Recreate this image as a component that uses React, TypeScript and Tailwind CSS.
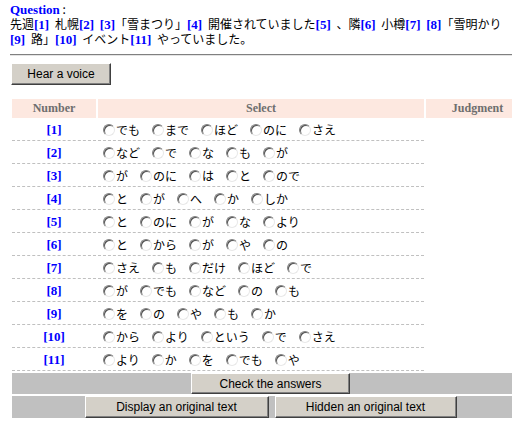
import React from 'react';

const options: string[][] = [
  ['でも', 'まで', 'ほど', 'のに', 'さえ'],
  ['など', 'で', 'な', 'も', 'が'],
  ['が', 'のに', 'は', 'と', 'ので'],
  ['と', 'が', 'へ', 'か', 'しか'],
  ['と', 'のに', 'が', 'な', 'より'],
  ['と', 'から', 'が', 'や', 'の'],
  ['さえ', 'も', 'だけ', 'ほど', 'で'],
  ['が', 'でも', 'など', 'の', 'も'],
  ['を', 'の', 'や', 'も', 'か'],
  ['から', 'より', 'という', 'で', 'さえ'],
  ['より', 'か', 'を', 'でも', 'や'],
];

const Ref: React.FC<{ n: number }> = ({ n }) => (
  <a className="font-['Liberation_Serif',serif] font-bold text-[13px] leading-none text-[#0000ff]">[{n}]</a>
);

const Radio: React.FC = () => (
  <span className="inline-block w-[12px] h-[12px] shrink-0 rounded-full bg-white border border-t-[#808080] border-l-[#808080] border-r-[#e8e8e8] border-b-[#e8e8e8] shadow-[inset_1px_1px_0_#505050]" />
);

const Btn: React.FC<{ className?: string; children: React.ReactNode }> = ({ className, children }) => (
  <button
    className={`bg-[#d4d0c8] text-black text-[12px] leading-none font-['Liberation_Sans',sans-serif] border border-t-white border-l-white border-r-[#404040] border-b-[#404040] shadow-[inset_-1px_-1px_0_#808080] ${className ?? ''}`}
  >
    {children}
  </button>
);

const Header: React.FC<{ children: React.ReactNode }> = ({ children }) => (
  <div className="h-[19px] bg-[#fde8e0] text-center leading-[19px] font-['Liberation_Serif',serif] font-bold text-[12px] text-[#6e6e6e]">
    {children}
  </div>
);

export default function App() {
  return (
    <div className="w-[512px] h-[423px] overflow-hidden bg-white pl-[10px] text-black text-[12px] font-['Noto_Sans_CJK_JP',sans-serif]">
      <div className="pt-[1px] leading-[15px]">
        <div className="h-[15px]">
          <span className="font-['Liberation_Serif',serif] font-bold text-[13px] leading-none text-[#0000ff]">Question</span> :
        </div>
        <p className="w-[502px] leading-[15px] [word-spacing:3px]">
          先週<Ref n={1} /> 札幌<Ref n={2} /> <Ref n={3} />「雪まつり」<Ref n={4} /> 開催されていました<Ref n={5} /> 、隣<Ref n={6} /> 小樽<Ref n={7} /> <Ref n={8} />「雪明かり<Ref n={9} /> 路」<Ref n={10} /> イベント<Ref n={11} /> やっていました。
        </p>
      </div>

      <div className="mt-[8px] w-[502px] h-[2px] border-t border-t-[#808080] border-b border-b-[#e4e4e4]" />

      <Btn className="mt-[7px] ml-[1px] w-[100px] h-[22px]">Hear a voice</Btn>

      <div className="mt-[12px] w-[521px] p-[2px] grid grid-cols-[84px_326px_103px] gap-[2px]">
        <Header>Number</Header>
        <Header>Select</Header>
        <Header>Judgment</Header>

        {options.map((row, i) => (
          <React.Fragment key={i}>
            <div className="h-[21px] border-b border-dashed border-[#c0c0c0] text-center pt-[2px] leading-[14px]">
              <Ref n={i + 1} />
            </div>
            <div className="h-[21px] border-b border-dashed border-[#c0c0c0] flex items-center pl-[5px]">
              {row.map((o, j) => (
                <label key={j} className="flex items-center mr-[12px]">
                  <Radio />
                  <span className="ml-[1px] leading-[14px]">{o}</span>
                </label>
              ))}
            </div>
            <div />
          </React.Fragment>
        ))}

        <div className="col-span-3 h-[21px] bg-[#c0c0c0] flex justify-center">
          <Btn className="w-[159px] h-[21px]">Check the answers</Btn>
        </div>
        <div className="col-span-3 h-[22px] bg-[#c0c0c0] flex justify-center gap-[6px]">
          <Btn className="w-[184px] h-[22px]">Display an original text</Btn>
          <Btn className="w-[182px] h-[22px]">Hidden an original text</Btn>
        </div>
      </div>
    </div>
  );
}
